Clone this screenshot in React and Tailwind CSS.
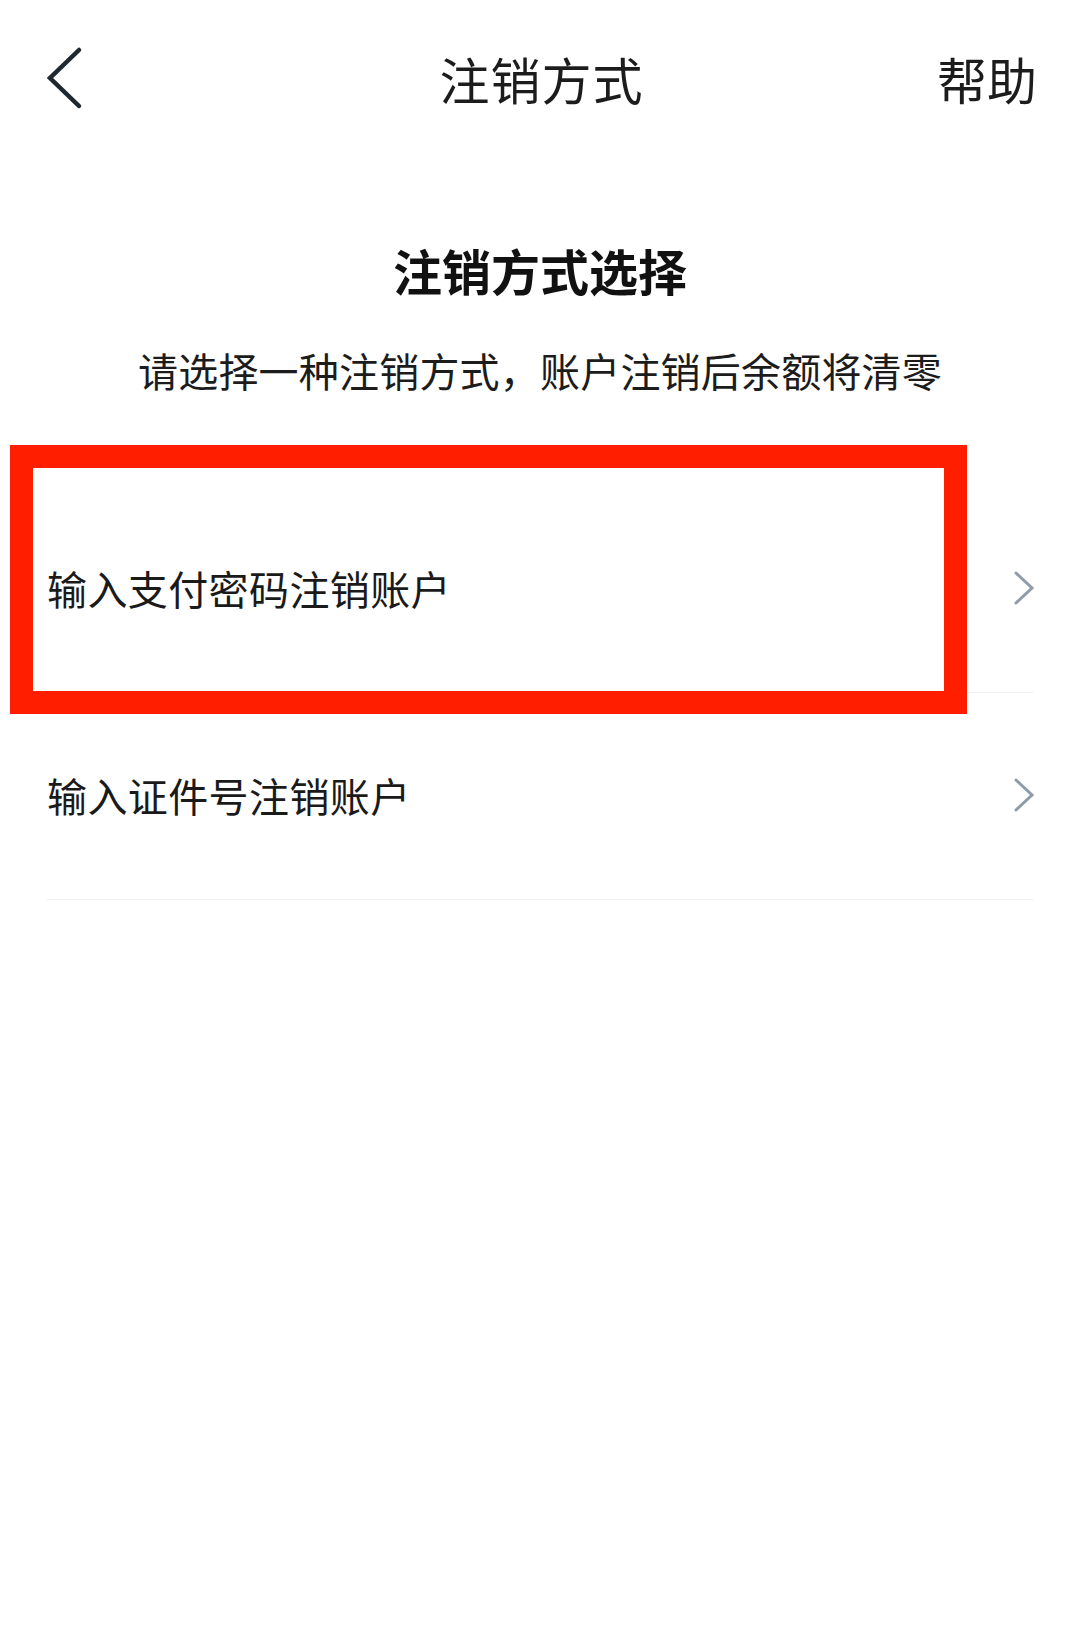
import { useState } from 'react';

const options = [
  { id: 'password', label: '输入支付密码注销账户', highlighted: true },
  { id: 'idcard', label: '输入证件号注销账户', highlighted: false },
];

function BackIcon() {
  return (
    <svg width="40" height="64" viewBox="0 0 40 64" fill="none">
      <path d="M33 4 L4 32 L33 60" stroke="#1e2831" strokeWidth="4.5" strokeLinecap="round" strokeLinejoin="miter" />
    </svg>
  );
}

function ChevronRight() {
  return (
    <svg width="24" height="36" viewBox="0 0 24 36" fill="none">
      <path d="M4 3 L20 18 L4 33" stroke="#8f9ba7" strokeWidth="3" strokeLinecap="round" strokeLinejoin="miter" />
    </svg>
  );
}

export default function App() {
  const [selected, setSelected] = useState('password');

  return (
    <div
      className="w-[1080px] min-h-[1650px] bg-white text-[#1a1a1a]"
      style={{ fontFamily: '"Noto Sans CJK SC", "Noto Sans", sans-serif' }}
    >
      {/* Header */}
      <div className="h-[156px] flex items-center justify-between pl-[46px] pr-[43px]">
        <button className="w-[100px] flex items-center">
          <BackIcon />
        </button>
        <h1 className="text-[50px] leading-none font-normal text-[#1c1c1c] tracking-[1px]">注销方式</h1>
        <button className="w-[100px] text-right text-[50px] leading-none text-[#1c1c1c]">帮助</button>
      </div>

      {/* Intro */}
      <div className="flex flex-col items-center">
        <h2 className="mt-[86px] text-[49px] leading-[56px] font-bold text-[#111]">注销方式选择</h2>
        <p className="mt-[48px] text-[40px] leading-[48px] tracking-[0.2px] text-[#1c1c1c]">请选择一种注销方式，账户注销后余额将清零</p>
      </div>

      {/* Options */}
      <div className="mt-[92px]">
        {options.map((opt) => (
          <div key={opt.id} className="relative px-[47px]" onClick={() => setSelected(opt.id)}>
            <div className="h-[207px] pb-[2px] flex items-center justify-between border-b border-[#eef1f4]">
              <span className="text-[40px] leading-none tracking-[0.4px] text-[#1a1a1a]">{opt.label}</span>
              <span className="mr-[-3px]"><ChevronRight /></span>
            </div>
            {opt.highlighted && selected && (
              <div className="absolute left-[10px] top-[-41px] w-[957px] h-[269px] border-[23px] border-[#ff1f00] pointer-events-none" />
            )}
          </div>
        ))}
      </div>
    </div>
  );
}
